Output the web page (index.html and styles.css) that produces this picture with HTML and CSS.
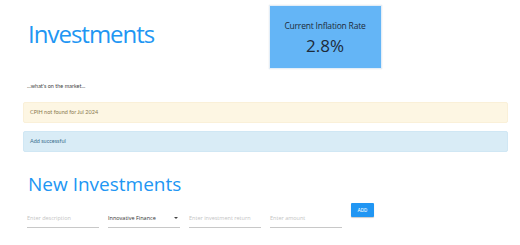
FILE: index.html
```html
<!DOCTYPE html>
<html>
<head>
<meta charset="utf-8">
<link rel="stylesheet" href="styles.css">
</head>
<body>
<div class="container">
  <div class="header-row">
    <div class="col">
      <h1 class="title">Investments</h1>
    </div>
    <div class="col">
      <div class="rate-card">
        <div class="rate-label">Current Inflation Rate</div>
        <div class="rate-value">2.8%</div>
      </div>
    </div>
  </div>
  <p class="subtitle">...what's on the market...</p>
  <div class="alert alert-warning">CPIH not found for Jul 2024</div>
  <div class="alert alert-info">Add successful</div>
  <h2 class="section-title">New Investments</h2>
  <div class="form-row">
    <div class="field"><span class="placeholder">Enter description</span></div>
    <div class="field select"><span class="value">Innovative Finance</span><span class="caret"></span></div>
    <div class="field"><span class="placeholder">Enter investment return</span></div>
    <div class="field"><span class="placeholder">Enter amount</span></div>
    <button class="btn-add">ADD</button>
  </div>
</div>
</body>
</html>
```
FILE: styles.css
```css
html, body {
  margin: 0;
  padding: 0;
  background: #ffffff;
}
body {
  font-family: "Open Sans", "Noto Sans", sans-serif;
  color: #333;
}
.container {
  width: 485px;
  margin-left: 23px;
}
.header-row {
  display: grid;
  grid-template-columns: 1fr 1fr;
}
.col {
  padding: 0 5px;
}
.title {
  margin: 0;
  padding-top: 16px;
  font-size: 24px;
  line-height: 36px;
  font-weight: 400;
  color: #2196f3;
  letter-spacing: -1px;
}
.rate-card {
  margin-top: 5px;
  margin-left: -2px;
  width: 113px;
  height: 64px;
  box-sizing: border-box;
  background: #64b5f6;
  border: 1px solid #e3eef8;
  box-shadow: 0 0 1px rgba(0,0,0,0.15);
  text-align: center;
  color: #1d2b3a;
  padding-top: 14px;
}
.rate-label {
  font-size: 8.5px;
  line-height: 12px;
  letter-spacing: -0.2px;
}
.rate-value {
  font-size: 17px;
  line-height: 24px;
  margin-top: 2px;
}
.subtitle {
  margin: 13px 0 0 4px;
  font-family: "Lato", sans-serif;
  font-size: 5.5px;
  line-height: 8px;
  color: #444;
}
.alert {
  box-sizing: border-box;
  height: 21px;
  padding: 0 6px;
  font-family: "Lato", sans-serif;
  font-size: 5.5px;
  line-height: 19px;
  border-radius: 2px;
}
.alert-warning {
  margin-top: 12px;
  background: #fdf6e3;
  border: 1px solid #faf0d8;
  color: #8a7a50;
}
.alert-info {
  margin-top: 8px;
  background: #d9ecf6;
  border: 1px solid #d0e7f4;
  color: #3a6f8f;
}
.section-title {
  margin: 0;
  padding: 19px 0 0 5px;
  font-size: 19px;
  line-height: 26px;
  font-weight: 400;
  color: #2196f3;
}
.form-row {
  display: flex;
  align-items: flex-start;
  gap: 9px;
  margin-top: 6px;
  padding-left: 4px;
}
.field {
  width: 72px;
  height: 20px;
  margin-top: 5px;
  box-sizing: border-box;
  border-bottom: 1px solid #c8c8c8;
  display: flex;
  align-items: center;
  font-size: 5.5px;
}
.placeholder {
  color: #c4c4c4;
}
.select {
  justify-content: space-between;
  padding-right: 2px;
}
.value {
  color: #333;
}
.caret {
  width: 0;
  height: 0;
  border-left: 2px solid transparent;
  border-right: 2px solid transparent;
  border-top: 2px solid #444;
}
.btn-add {
  width: 23px;
  height: 14px;
  padding: 0;
  border: none;
  border-radius: 1px;
  background: #2196f3;
  color: #ffffff;
  font-family: "Roboto", sans-serif;
  font-size: 5px;
  box-shadow: 0 1px 1px rgba(0,0,0,0.2);
}
```
